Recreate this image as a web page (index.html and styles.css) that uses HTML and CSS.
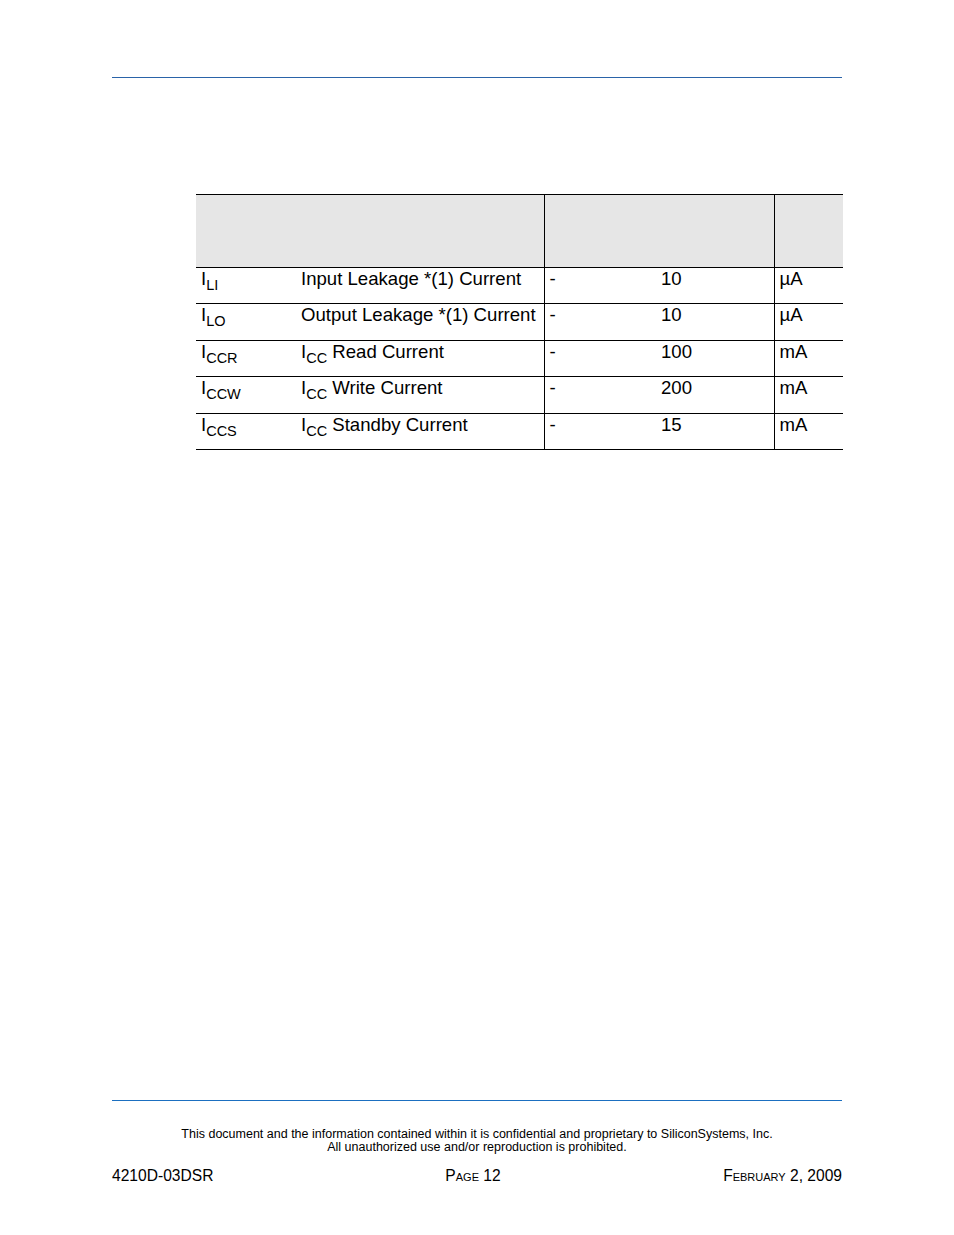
FILE: index.html
```html
<!DOCTYPE html>
<html>
<head>
<meta charset="utf-8">
<link rel="stylesheet" href="styles.css">
</head>
<body>
<div class="page">
  <div class="top-rule"></div>
  <table class="spec">
    <colgroup>
      <col class="c-sym"><col class="c-par"><col class="c-min"><col class="c-max"><col class="c-unit">
    </colgroup>
    <thead>
      <tr class="head">
        <th colspan="2"></th>
        <th colspan="2" class="vl"></th>
        <th class="vl"></th>
      </tr>
    </thead>
    <tbody>
      <tr>
        <td>I<sub>LI</sub></td>
        <td>Input Leakage *(1) Current</td>
        <td class="vl">-</td>
        <td>10</td>
        <td class="vl">µA</td>
      </tr>
      <tr>
        <td>I<sub>LO</sub></td>
        <td>Output Leakage *(1) Current</td>
        <td class="vl">-</td>
        <td>10</td>
        <td class="vl">µA</td>
      </tr>
      <tr>
        <td>I<sub>CCR</sub></td>
        <td>I<sub>CC</sub> Read Current</td>
        <td class="vl">-</td>
        <td>100</td>
        <td class="vl">mA</td>
      </tr>
      <tr>
        <td>I<sub>CCW</sub></td>
        <td>I<sub>CC</sub> Write Current</td>
        <td class="vl">-</td>
        <td>200</td>
        <td class="vl">mA</td>
      </tr>
      <tr>
        <td>I<sub>CCS</sub></td>
        <td>I<sub>CC</sub> Standby Current</td>
        <td class="vl">-</td>
        <td>15</td>
        <td class="vl">mA</td>
      </tr>
    </tbody>
  </table>
  <div class="footer">
    <p class="notice">This document and the information contained within it is confidential and proprietary to SiliconSystems, Inc.<br>All unauthorized use and/or reproduction is prohibited.</p>
    <div class="foot-row">
      <span class="f-left">4210D-03DSR</span>
      <span class="f-mid sc">Page 12</span>
      <span class="f-right sc">February 2, 2009</span>
    </div>
  </div>
</div>
</body>
</html>
```

FILE: styles.css
```css
html, body {
  margin: 0;
  padding: 0;
  background: #ffffff;
}
body {
  font-family: "Liberation Sans", Arial, sans-serif;
  color: #000;
}
.page {
  width: 954px;
  height: 1235px;
  display: flex;
  flex-direction: column;
  box-sizing: border-box;
  padding: 77px 112px 0 112px;
}
.top-rule {
  border-top: 1px solid #2a63a8;
  height: 0;
}
.spec {
  margin-top: 116px;
  margin-left: 84px;
  width: 647px;
  border-collapse: collapse;
  table-layout: fixed;
  font-size: 18.6px;
}
.c-sym { width: 100px; }
.c-par { width: 248px; }
.c-min { width: 112px; }
.c-max { width: 118px; }
.c-unit { width: 69px; }
.spec tr.head th {
  height: 72px;
  background: #e6e6e6;
  border-top: 1.5px solid #000;
  border-bottom: 1px solid #000;
  padding: 0;
}
.spec td {
  height: 35.4px;
  padding: 0 5px 0 5px;
  vertical-align: top;
  line-height: 21px;
  border-bottom: 1px solid #000;
  white-space: nowrap;
  text-align: left;
}
.spec .vl {
  border-left: 1px solid #000;
}
.spec sub {
  font-size: 14.5px;
  vertical-align: -5px;
  line-height: 0;
}
.footer {
  margin-top: auto;
  height: 135px;
  border-top: 1px solid #1b6fc0;
  box-sizing: border-box;
}
.notice {
  margin: 27px 0 0 0;
  text-align: center;
  font-size: 12.5px;
  line-height: 13px;
}
.foot-row {
  margin-top: 13px;
  display: grid;
  grid-template-columns: 1fr auto 1fr;
  font-size: 15.6px;
  line-height: 17px;
}
.f-left { justify-self: start; }
.f-mid { justify-self: center; margin-right: 8px; }
.f-right { justify-self: end; }
.sc {
  font-variant: small-caps;
}
```
